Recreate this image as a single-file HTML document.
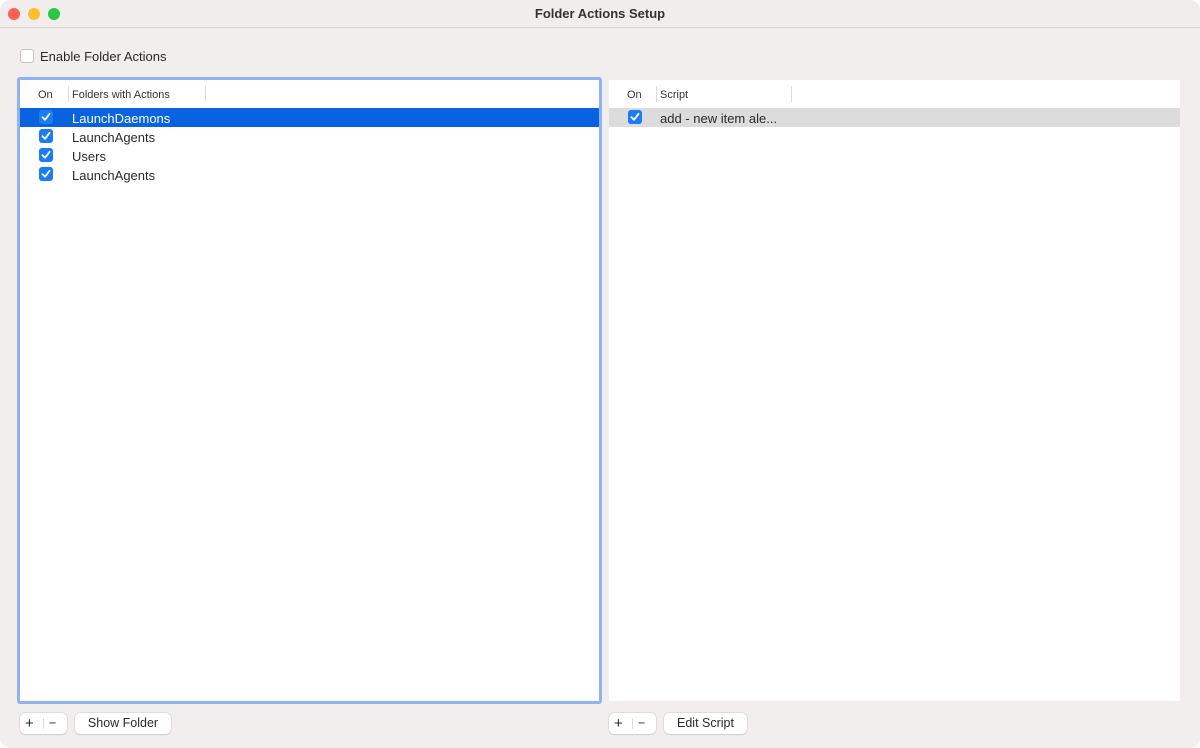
<!DOCTYPE html>
<html><head><style>
*{box-sizing:border-box;margin:0;padding:0}
body{width:1200px;height:748px;background:#fff;font-family:"Liberation Sans",sans-serif;overflow:hidden;position:relative}
.win{position:absolute;left:0;top:0;width:1200px;height:748px;background:#f3eeee;border-radius:10px;overflow:hidden}
.title{position:absolute;left:0;top:0;width:1200px;height:28px;border-bottom:1px solid #dcd6d6;background:#f2eded;text-align:center;font-size:13px;font-weight:bold;color:#333;line-height:28px}
.dot{position:absolute;top:8px;width:12px;height:12px;border-radius:50%}
.abs{position:absolute}
.cb{position:absolute;width:14px;height:14px;border-radius:3px;background:#1a7cf5;}
.cb svg{position:absolute;left:2px;top:2px}
.txt{position:absolute;font-size:13px;color:#2a2a2a}
.hdr{position:absolute;font-size:11px;color:#333}
.sep{position:absolute;width:1px;height:16px;background:#ddd}
.btn{position:absolute;height:21px;background:#fff;border-radius:5px;box-shadow:0 0 0 .5px #cfc9c9,0 1px 1px rgba(0,0,0,.12);font-size:12.5px;color:#2a2a2a;text-align:center;line-height:21px}
</style></head><body>
<div class="win">
<div class="title">Folder Actions Setup
<div class="dot" style="left:8px;background:#fe5f57"></div>
<div class="dot" style="left:28px;background:#febc2e"></div>
<div class="dot" style="left:48px;background:#28c840"></div>
</div>
<div class="abs" style="left:20px;top:49px;width:14px;height:14px;border:1px solid #c8c2c2;border-radius:3px;background:#fff"></div>
<div class="txt" style="left:40px;top:49px">Enable Folder Actions</div>

<div class="abs" style="left:17px;top:77px;width:585px;height:627px;border:3px solid #8fb2f2;border-radius:3px;background:#fff"></div>
<div class="hdr" style="left:38px;top:89px">On</div>
<div class="sep" style="left:68px;top:86px"></div>
<div class="hdr" style="left:72px;top:89px">Folders with Actions</div>
<div class="sep" style="left:205px;top:86px"></div>
<div class="abs" style="left:20px;top:108px;width:579px;height:19px;background:#0963e0"></div>
<div class="cb" style="left:39px;top:110px"><svg width="10" height="10" viewBox="0 0 10 10"><path d="M1.5 5.2 L4 7.8 L8.6 1.8" stroke="#fff" stroke-width="1.8" fill="none" stroke-linecap="round" stroke-linejoin="round"/></svg></div>
<div class="txt" style="left:72px;top:111px;color:#fff">LaunchDaemons</div>
<div class="cb" style="left:39px;top:129px"><svg width="10" height="10" viewBox="0 0 10 10"><path d="M1.5 5.2 L4 7.8 L8.6 1.8" stroke="#fff" stroke-width="1.8" fill="none" stroke-linecap="round" stroke-linejoin="round"/></svg></div>
<div class="txt" style="left:72px;top:130px">LaunchAgents</div>
<div class="cb" style="left:39px;top:148px"><svg width="10" height="10" viewBox="0 0 10 10"><path d="M1.5 5.2 L4 7.8 L8.6 1.8" stroke="#fff" stroke-width="1.8" fill="none" stroke-linecap="round" stroke-linejoin="round"/></svg></div>
<div class="txt" style="left:72px;top:149px">Users</div>
<div class="cb" style="left:39px;top:167px"><svg width="10" height="10" viewBox="0 0 10 10"><path d="M1.5 5.2 L4 7.8 L8.6 1.8" stroke="#fff" stroke-width="1.8" fill="none" stroke-linecap="round" stroke-linejoin="round"/></svg></div>
<div class="txt" style="left:72px;top:168px">LaunchAgents</div>

<div class="abs" style="left:609px;top:80px;width:571px;height:621px;background:#fff"></div>
<div class="hdr" style="left:627px;top:89px">On</div>
<div class="sep" style="left:656px;top:86px"></div>
<div class="hdr" style="left:660px;top:89px">Script</div>
<div class="sep" style="left:791px;top:86px"></div>
<div class="abs" style="left:609px;top:108px;width:571px;height:19px;background:#dcdcdc"></div>
<div class="cb" style="left:628px;top:110px"><svg width="10" height="10" viewBox="0 0 10 10"><path d="M1.5 5.2 L4 7.8 L8.6 1.8" stroke="#fff" stroke-width="1.8" fill="none" stroke-linecap="round" stroke-linejoin="round"/></svg></div>
<div class="txt" style="left:660px;top:111px">add - new item ale...</div>

<div class="btn" style="left:20px;top:713px;width:47px"><span style="position:absolute;left:5px;font-size:15px">+</span><span style="position:absolute;left:23px;top:5px;width:1px;height:11px;background:#ddd"></span><span style="position:absolute;left:29px">−</span></div>
<div class="btn" style="left:75px;top:713px;width:96px">Show Folder</div>
<div class="btn" style="left:609px;top:713px;width:47px"><span style="position:absolute;left:5px;font-size:15px">+</span><span style="position:absolute;left:23px;top:5px;width:1px;height:11px;background:#ddd"></span><span style="position:absolute;left:29px">−</span></div>
<div class="btn" style="left:664px;top:713px;width:83px">Edit Script</div>
</div>
</body></html>
